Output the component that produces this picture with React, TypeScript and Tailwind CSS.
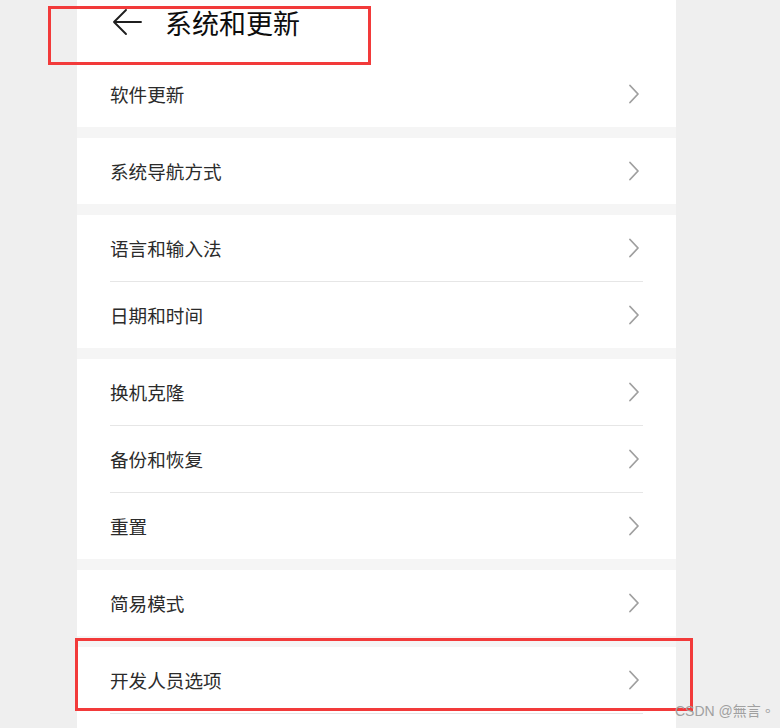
import React from "react";

const Chevron = () => (
  <svg width="12" height="20" viewBox="0 0 12 20" fill="none" className="shrink-0">
    <polyline points="2,1.5 10,10 2,18.5" stroke="#9f9f9f" strokeWidth="1.8" strokeLinecap="round" strokeLinejoin="round" />
  </svg>
);

const Row = ({ label, divider }: { label: string; divider?: boolean }) => (
  <div className="mx-[33px]">
    {divider && <div className="h-px bg-[#e6e6e6]" />}
    <div className="h-[66px] flex items-center justify-between pr-[3px]">
      <span className="text-[18.6px] text-[#2b2b2b] leading-none">{label}</span>
      <Chevron />
    </div>
  </div>
);

const Section = ({ children }: { children: React.ReactNode }) => (
  <div className="bg-white flex flex-col">{children}</div>
);

export default function App() {
  return (
    <div
      className="relative w-[780px] h-[728px] overflow-hidden bg-[#efefef]"
      style={{ fontFamily: '"Noto Sans CJK SC", "Noto Sans", sans-serif' }}
    >
      <div className="ml-[77px] w-[599px] h-full bg-[#f5f5f5] flex flex-col gap-[11px]">
        <Section>
          <div className="h-[61px]">
            <div className="h-[44px] flex items-center pl-[35px]">
              <svg width="30" height="28" viewBox="0 0 30 28" fill="none">
                <path d="M29 14H2M14 2L2 14L14 26" stroke="#1f1f1f" strokeWidth="1.9" strokeLinecap="round" strokeLinejoin="round" />
              </svg>
              <span className="ml-[23px] text-[27px] font-normal text-[#0d0d0d] leading-none">系统和更新</span>
            </div>
          </div>
          <Row label="软件更新" />
        </Section>
        <Section>
          <Row label="系统导航方式" />
        </Section>
        <Section>
          <Row label="语言和输入法" />
          <Row label="日期和时间" divider />
        </Section>
        <Section>
          <Row label="换机克隆" />
          <Row label="备份和恢复" divider />
          <Row label="重置" divider />
        </Section>
        <Section>
          <Row label="简易模式" />
        </Section>
        <Section>
          <Row label="开发人员选项" />
          <Row label="" divider />
        </Section>
      </div>

      <div className="absolute left-[48px] top-[6px] w-[323px] h-[59px] border-[3px] border-[#f23a3a]" />
      <div className="absolute left-[75px] top-[638px] w-[618px] h-[73px] border-[3px] border-[#f23a3a]" />
      <div
        className="absolute left-[675px] top-[704px] whitespace-nowrap text-[14px] text-[#a0a0a0] leading-none"
        style={{ fontFamily: '"Liberation Sans", "Noto Sans CJK TC", sans-serif' }}
      >
        CSDN @無言。
      </div>
    </div>
  );
}
